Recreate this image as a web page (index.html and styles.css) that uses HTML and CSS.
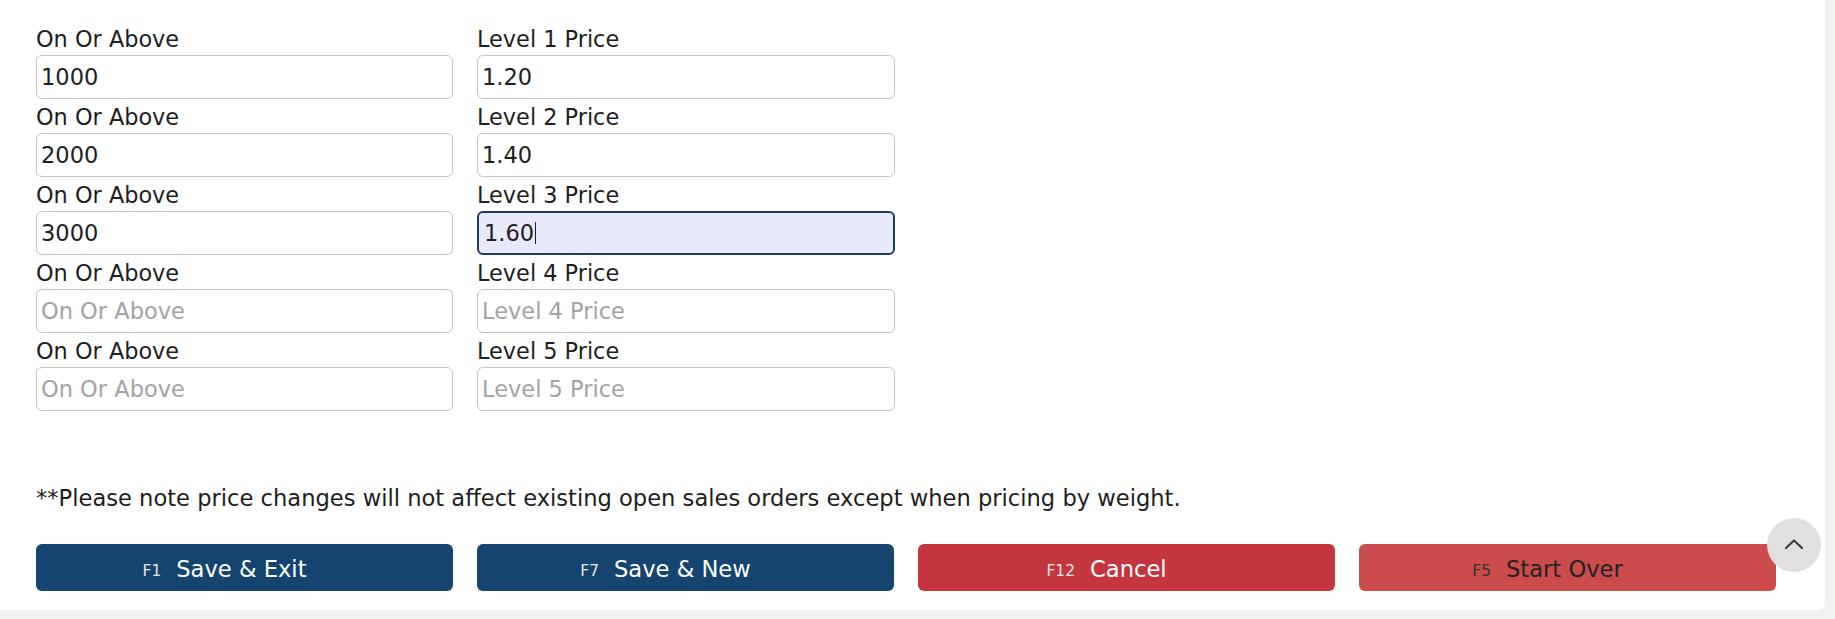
FILE: index.html
```html
<!DOCTYPE html>
<html>
<head>
<meta charset="utf-8">
<link rel="stylesheet" href="styles.css">
</head>
<body>
<div class="card">
  <div class="fields">
    <div class="field"><label class="lbl">On Or Above</label><input class="inp" type="text" value="1000" placeholder="On Or Above"></div>
    <div class="field"><label class="lbl">Level 1 Price</label><input class="inp" type="text" value="1.20" placeholder="Level 1 Price"></div>
    <div class="field"><label class="lbl">On Or Above</label><input class="inp" type="text" value="2000" placeholder="On Or Above"></div>
    <div class="field"><label class="lbl">Level 2 Price</label><input class="inp" type="text" value="1.40" placeholder="Level 2 Price"></div>
    <div class="field"><label class="lbl">On Or Above</label><input class="inp" type="text" value="3000" placeholder="On Or Above"></div>
    <div class="field"><label class="lbl">Level 3 Price</label><div class="inp focused">1.60<span class="caret"></span></div></div>
    <div class="field"><label class="lbl">On Or Above</label><input class="inp" type="text" value="" placeholder="On Or Above"></div>
    <div class="field"><label class="lbl">Level 4 Price</label><input class="inp" type="text" value="" placeholder="Level 4 Price"></div>
    <div class="field"><label class="lbl">On Or Above</label><input class="inp" type="text" value="" placeholder="On Or Above"></div>
    <div class="field"><label class="lbl">Level 5 Price</label><input class="inp" type="text" value="" placeholder="Level 5 Price"></div>
  </div>
  <p class="note">**Please note price changes will not affect existing open sales orders except when pricing by weight.</p>
  <div class="actions">
    <button class="btn btn-blue"><span class="key">F1</span>Save &amp; Exit</button>
    <button class="btn btn-blue"><span class="key">F7</span>Save &amp; New</button>
    <button class="btn btn-red"><span class="key">F12</span>Cancel</button>
    <button class="btn btn-light-red"><span class="key">F5</span>Start Over</button>
  </div>
</div>
<button class="to-top" aria-label="Scroll to top">
  <svg width="20" height="12" viewBox="0 0 20 12"><path d="M2 10 L10 2.5 L18 10" fill="none" stroke="#3c3c3c" stroke-width="2.2" stroke-linecap="round" stroke-linejoin="round"/></svg>
</button>
</body>
</html>
```
FILE: styles.css
```css
html, body {
  margin: 0;
  padding: 0;
}
body {
  background: #f1f1f1;
  width: 1835px;
  height: 619px;
  overflow: hidden;
  font-family: "DejaVu Sans", Verdana, sans-serif;
  color: #1e1e1e;
}
.card {
  width: 1825px;
  height: 610px;
  background: #ffffff;
  border-bottom-right-radius: 7px;
  box-sizing: border-box;
  padding: 26px 0 0 36px;
}
.fields {
  display: grid;
  grid-template-columns: 417px 418px;
  column-gap: 24px;
  row-gap: 5px;
}
.field {
  display: flex;
  flex-direction: column;
}
.lbl {
  font-size: 22.4px;
  line-height: 26px;
  margin-bottom: 3px;
  color: #1e1e1e;
}
.inp {
  box-sizing: border-box;
  height: 44px;
  width: 100%;
  border: 1px solid #c4c4c4;
  border-radius: 6px;
  padding: 0 4px;
  font-family: "DejaVu Sans", Verdana, sans-serif;
  font-size: 22.5px;
  color: #1e1e1e;
  background: #fff;
  outline: none;
  margin: 0;
}
.inp::placeholder {
  color: #a3a3a3;
}
.focused {
  display: flex;
  align-items: center;
  border: 2px solid #1c3d60;
  background: #e8e9fc;
  padding: 0 5px;
}
.caret {
  display: inline-block;
  width: 1px;
  height: 22px;
  background: #1e1e1e;
  margin-left: 1px;
}
.note {
  margin: 74px 0 0 0;
  font-size: 22.6px;
  line-height: 26px;
  color: #1e1e1e;
}
.actions {
  margin-top: 33px;
  display: grid;
  grid-template-columns: repeat(4, 417px);
  column-gap: 24px;
}
.btn {
  height: 47px;
  border: none;
  border-radius: 6px;
  font-family: "DejaVu Sans", Verdana, sans-serif;
  font-size: 22.6px;
  color: #ffffff;
  display: flex;
  align-items: center;
  justify-content: center;
  padding: 2px 40px 0 0;
  margin: 0;
}
.key {
  font-size: 15.5px;
  margin-right: 15px;
  margin-top: 4px;
  color: #e6e6e6;
}
.btn-blue {
  background: #14446f;
}
.btn-red {
  background: #c4353d;
}
.btn-light-red {
  background: #cc4b4d;
  color: #222222;
}
.btn-light-red .key {
  color: #333333;
}
.to-top {
  position: absolute;
  left: 1767px;
  top: 518px;
  width: 54px;
  height: 54px;
  border-radius: 50%;
  border: none;
  background: #e2dfdf;
  padding: 0;
  display: flex;
  align-items: center;
  justify-content: center;
}
.to-top svg {
  margin-bottom: 2px;
}
```
